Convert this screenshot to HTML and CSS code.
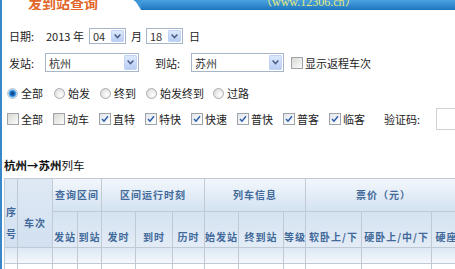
FILE: index.html
```html
<!DOCTYPE html>
<html lang="zh-CN">
<head>
<meta charset="utf-8">
<title>发到站查询</title>
<link rel="stylesheet" href="styles.css">
</head>
<body>
<div class="page">
  <div class="hd">
    <div class="tab"><span class="tab-title">发到站查询</span></div>
    <svg class="corner" width="8" height="10" viewBox="0 0 8 10"><path d="M0 0 C3 1 5 5 8 10 L8 0 Z" fill="#3f97d8"/></svg>
    <div class="bar"><span class="site">（www.12306.cn）</span></div>
  </div>

  <div class="row r1">
    <span class="lbl">日期:</span>
    <span class="year">2013 年</span>
    <span class="sel s-sm"><span class="val">04</span><span class="btn"><svg width="7" height="5" viewBox="0 0 7 5"><path d="M0.6 0.6 L3.5 3.6 L6.4 0.6" fill="none" stroke="#4a5d85" stroke-width="1.5"/></svg></span></span>
    <span class="unit u-month">月</span>
    <span class="sel s-sm"><span class="val">18</span><span class="btn"><svg width="7" height="5" viewBox="0 0 7 5"><path d="M0.6 0.6 L3.5 3.6 L6.4 0.6" fill="none" stroke="#4a5d85" stroke-width="1.5"/></svg></span></span>
    <span class="unit u-day">日</span>
  </div>

  <div class="row r2">
    <span class="lbl lbl2">发站:</span>
    <span class="sel s-lg s-from"><span class="val">杭州</span><span class="btn"><svg width="7" height="5" viewBox="0 0 7 5"><path d="M0.6 0.6 L3.5 3.6 L6.4 0.6" fill="none" stroke="#4a5d85" stroke-width="1.5"/></svg></span></span>
    <span class="lbl lbl2 lbl-to">到站:</span>
    <span class="sel s-lg s-to"><span class="val">苏州</span><span class="btn"><svg width="7" height="5" viewBox="0 0 7 5"><path d="M0.6 0.6 L3.5 3.6 L6.4 0.6" fill="none" stroke="#4a5d85" stroke-width="1.5"/></svg></span></span>
    <span class="cb cb-ret"></span><span class="ret-text">显示返程车次</span>
  </div>

  <div class="row r3">
    <span class="opt o1"><span class="rd on"></span><span>全部</span></span>
    <span class="opt o2"><span class="rd"></span><span>始发</span></span>
    <span class="opt o2"><span class="rd"></span><span>终到</span></span>
    <span class="opt o3"><span class="rd"></span><span>始发终到</span></span>
    <span class="opt"><span class="rd"></span><span>过路</span></span>
  </div>

  <div class="row r4">
    <span class="chk"><span class="cb"></span><span>全部</span></span>
    <span class="chk"><span class="cb"></span><span>动车</span></span>
    <span class="chk"><span class="cb on"><svg width="8" height="8" viewBox="0 0 8 8"><path d="M1 4 L3 6.2 L7 1.2" fill="none" stroke="#2a5aa8" stroke-width="1.4"/></svg></span><span>直特</span></span>
    <span class="chk"><span class="cb on"><svg width="8" height="8" viewBox="0 0 8 8"><path d="M1 4 L3 6.2 L7 1.2" fill="none" stroke="#2a5aa8" stroke-width="1.4"/></svg></span><span>特快</span></span>
    <span class="chk"><span class="cb on"><svg width="8" height="8" viewBox="0 0 8 8"><path d="M1 4 L3 6.2 L7 1.2" fill="none" stroke="#2a5aa8" stroke-width="1.4"/></svg></span><span>快速</span></span>
    <span class="chk"><span class="cb on"><svg width="8" height="8" viewBox="0 0 8 8"><path d="M1 4 L3 6.2 L7 1.2" fill="none" stroke="#2a5aa8" stroke-width="1.4"/></svg></span><span>普快</span></span>
    <span class="chk"><span class="cb on"><svg width="8" height="8" viewBox="0 0 8 8"><path d="M1 4 L3 6.2 L7 1.2" fill="none" stroke="#2a5aa8" stroke-width="1.4"/></svg></span><span>普客</span></span>
    <span class="chk"><span class="cb on"><svg width="8" height="8" viewBox="0 0 8 8"><path d="M1 4 L3 6.2 L7 1.2" fill="none" stroke="#2a5aa8" stroke-width="1.4"/></svg></span><span>临客</span></span>
    <span class="code-lbl">验证码:</span>
    <span class="code-input"></span>
  </div>

  <div class="caption"><b>杭州→苏州</b>列车</div>

  <table class="grid">
    <colgroup>
      <col class="w13"><col class="w35"><col class="w25"><col class="w24"><col class="w34"><col class="w37"><col class="w32"><col class="w34"><col class="w45"><col class="w22"><col class="w56"><col class="w70"><col class="w30">
    </colgroup>
    <tr class="h1">
      <th rowspan="2" class="rs xh">序<br>号</th>
      <th rowspan="2" class="rs">车次</th>
      <th colspan="2">查询区间</th>
      <th colspan="3">区间运行时刻</th>
      <th colspan="3">列车信息</th>
      <th colspan="3">票价（元）</th>
    </tr>
    <tr class="h2">
      <th>发站</th><th>到站</th><th>发时</th><th>到时</th><th>历时</th><th>始发站</th><th>终到站</th><th>等级</th><th>软卧上/下</th><th>硬卧上/中/下</th><th>硬座</th>
    </tr>
    <tr class="h3">
      <td></td><td></td><td></td><td></td><td></td><td></td><td></td><td></td><td></td><td></td><td></td><td></td><td></td>
    </tr>
    <tr class="body">
      <td></td><td></td><td></td><td></td><td></td><td></td><td></td><td></td><td></td><td></td><td></td><td></td><td></td>
    </tr>
  </table>
</div>
</body>
</html>
```

FILE: styles.css
```css
html, body {
  margin: 0;
  padding: 0;
  background: #fff;
}
body {
  overflow: hidden;
  font-family: "Noto Sans CJK SC", "Liberation Sans", sans-serif;
  font-size: 11px;
  color: #222;
}
.page {
  width: 620px;
  min-height: 269px;
  border-left: 2px solid #3a87c9;
}

/* header tab */
.hd {
  display: flex;
  height: 10px;
  overflow: hidden;
}
.tab {
  width: 131px;
  flex: none;
}
.tab-title {
  display: block;
  margin: -4px 0 0 26px;
  font-size: 14px;
  line-height: 14px;
  font-weight: bold;
  color: #e2662a;
  white-space: nowrap;
}
.corner {
  flex: none;
  display: block;
}
.bar {
  flex: 1;
  background: linear-gradient(#4aa3e0, #1f76bf);
}
.site {
  display: block;
  margin: -4px 0 0 119px;
  font-family: "Liberation Serif", serif;
  font-size: 12px;
  line-height: 12px;
  color: #e3ea80;
  white-space: nowrap;
}

/* form rows */
.row {
  display: flex;
  align-items: center;
  white-space: nowrap;
}
.r1 {
  margin-top: 18px;
  height: 16px;
  padding-left: 7px;
}
.r2 {
  margin-top: 9px;
  height: 19px;
  padding-left: 7px;
}
.r3 {
  margin-top: 14px;
  height: 14px;
  padding-left: 5px;
}
.r4 {
  margin-top: 7px;
  height: 23px;
  padding-left: 5px;
}
.lbl {
  width: 37px;
  flex: none;
}
.lbl2 {
  width: 36px;
}
.lbl-to {
  margin-left: 16px;
}
.year {
  width: 43px;
  flex: none;
  font-family: "Liberation Sans", "Noto Sans CJK SC", sans-serif;
}
.year {
  font-family: "Noto Sans CJK SC", sans-serif;
}
.unit {
  flex: none;
}
.u-month {
  margin-left: 5px;
  width: 15px;
}
.u-day {
  margin-left: 6px;
}

.sel {
  display: flex;
  align-items: center;
  box-sizing: border-box;
  flex: none;
  border: 1px solid #a6b5c7;
  background: #fff;
}
.s-sm {
  width: 37px;
  height: 16px;
}
.s-lg {
  height: 19px;
}
.s-from {
  width: 94px;
}
.s-to {
  width: 93px;
}
.sel .val {
  flex: 1;
  padding-left: 3px;
  color: #333;
  line-height: 12px;
}
.sel .btn {
  display: flex;
  align-items: center;
  justify-content: center;
  box-sizing: border-box;
  width: 13px;
  height: 12px;
  margin-right: 1px;
  border: 1px solid #c2d3f3;
  border-radius: 1px;
  background: linear-gradient(#dde8fc, #b9cef5);
}
.s-lg .btn {
  height: 15px;
}

/* checkbox & radio */
.cb {
  display: inline-flex;
  align-items: center;
  justify-content: center;
  box-sizing: border-box;
  width: 12px;
  height: 12px;
  flex: none;
  border: 1px solid #9ea4aa;
  background: linear-gradient(135deg, #d9d9d3, #fbfbfa);
}
.cb.on {
  background: linear-gradient(135deg, #e2e6ec, #ffffff);
}
.cb-ret {
  margin-left: 7px;
}
.ret-text {
  margin-left: 2px;
}
.rd {
  display: inline-block;
  box-sizing: border-box;
  width: 11px;
  height: 11px;
  flex: none;
  border-radius: 50%;
  border: 1px solid #a9aeb4;
  background: radial-gradient(circle at 65% 65%, #ffffff 0, #ececea 45%, #d2d2cf 100%);
  margin-right: 3px;
}
.rd.on {
  border-color: #b8c4d0;
  background: radial-gradient(circle at 50% 50%, #0d3c78 0, #1e6ec2 38%, #69b2ec 55%, #f4f8fb 75%);
}
.opt {
  display: flex;
  align-items: center;
  flex: none;
}
.o1 {
  width: 47px;
}
.o2 {
  width: 46px;
}
.o3 {
  width: 67px;
}
.chk {
  display: flex;
  align-items: center;
  flex: none;
  width: 46px;
}
.chk .cb {
  margin-right: 2px;
}
.code-lbl {
  margin-left: 9px;
  width: 52px;
  flex: none;
}
.code-input {
  box-sizing: border-box;
  width: 60px;
  height: 22px;
  flex: none;
  border: 1px solid #d2d2d2;
  background: #fff;
}

/* caption */
.caption {
  margin-top: 28px;
  height: 14px;
  line-height: 14px;
  padding-left: 2px;
  font-size: 11.5px;
  color: #111;
  white-space: nowrap;
}
.caption b {
  font-weight: bold;
}

/* table */
.grid {
  margin: 6px 0 0 2px;
  table-layout: fixed;
  border-collapse: separate;
  border-spacing: 0;
  border-top: 1px solid #c0cad4;
  border-left: 1px solid #c0cad4;
  width: 458px;
}
.w13 { width: 13px; }
.w35 { width: 35px; }
.w25 { width: 25px; }
.w24 { width: 24px; }
.w34 { width: 34px; }
.w37 { width: 37px; }
.w32 { width: 32px; }
.w45 { width: 45px; }
.w22 { width: 22px; }
.w56 { width: 56px; }
.w70 { width: 70px; }
.w30 { width: 30px; }

.grid th, .grid td {
  box-sizing: border-box;
  padding: 0;
  border-right: 1px solid #c0cad4;
  border-bottom: 1px solid #c0cad4;
  overflow: hidden;
  white-space: nowrap;
}
.grid th {
  font-size: 10px;
  line-height: 12px;
  font-weight: bold;
  letter-spacing: 1px;
  color: #41699a;
  text-align: center;
}
.h1 th {
  height: 33px;
  vertical-align: middle;
  background: linear-gradient(#f3f7fc, #d3e2f1);
}
.h1 th.rs {
  padding-top: 20px;
  background: linear-gradient(#dfe9f5, #d2e0f0);
}
.h1 th.xh {
  line-height: 22px;
  letter-spacing: 0;
}
.h2 th {
  height: 36px;
  vertical-align: bottom;
  padding-bottom: 4px;
  background: linear-gradient(#d4e2f1, #e3ecf6);
}
.h3 td {
  height: 16px;
  background: linear-gradient(#dce7f3, #f5f8fc);
}
.body td {
  height: 20px;
  background: #fff;
}
```
